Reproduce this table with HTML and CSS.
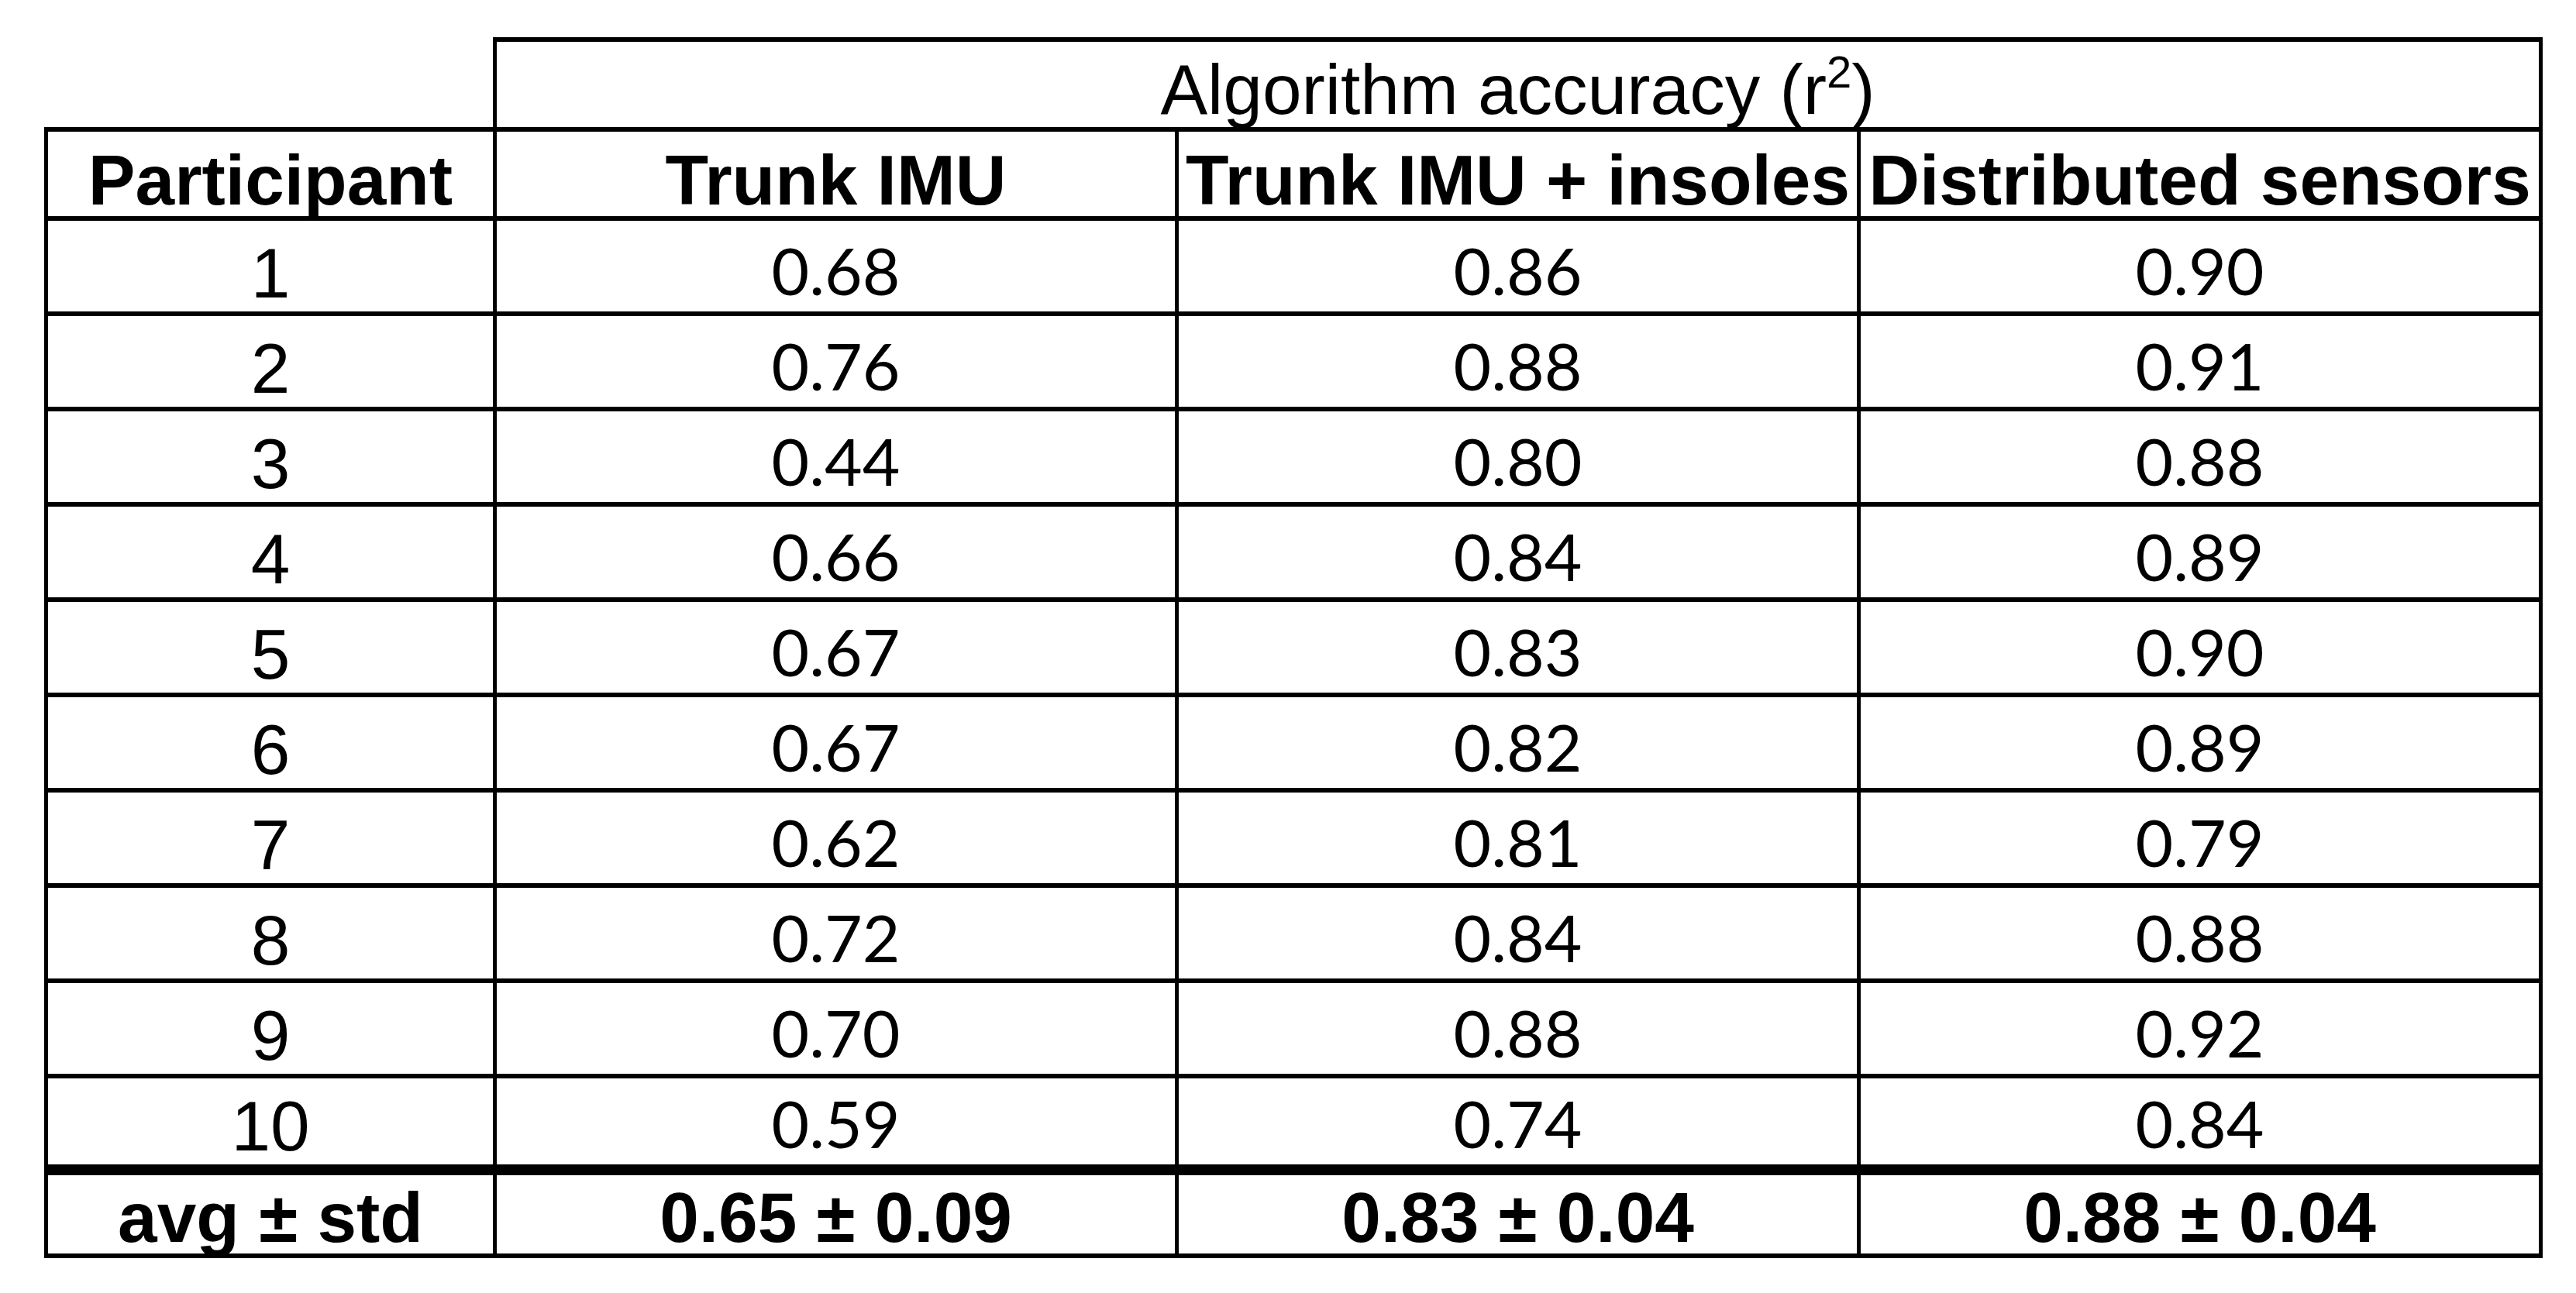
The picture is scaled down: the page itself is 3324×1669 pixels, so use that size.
FILE: index.html
```html
<!DOCTYPE html>
<html lang="en">
<head>
    <meta charset="UTF-8">
    <title>Algorithm accuracy</title>
    <link rel="stylesheet" href="styles.css">
</head>
<body>
    <table class="results">
        <colgroup>
            <col class="col-participant">
            <col class="col-value">
            <col class="col-value">
            <col class="col-value">
        </colgroup>
        <tr class="group-row">
            <td class="blank"></td>
            <td class="group" colspan="3">Algorithm accuracy (r<sup>2</sup>)</td>
        </tr>
        <tr class="head-row">
            <th>Participant</th>
            <th>Trunk IMU</th>
            <th>Trunk IMU + insoles</th>
            <th>Distributed sensors</th>
        </tr>
        <tr><td class="id">1</td><td>0.68</td><td>0.86</td><td>0.90</td></tr>
        <tr><td class="id">2</td><td>0.76</td><td>0.88</td><td>0.91</td></tr>
        <tr><td class="id">3</td><td>0.44</td><td>0.80</td><td>0.88</td></tr>
        <tr><td class="id">4</td><td>0.66</td><td>0.84</td><td>0.89</td></tr>
        <tr><td class="id">5</td><td>0.67</td><td>0.83</td><td>0.90</td></tr>
        <tr><td class="id">6</td><td>0.67</td><td>0.82</td><td>0.89</td></tr>
        <tr><td class="id">7</td><td>0.62</td><td>0.81</td><td>0.79</td></tr>
        <tr><td class="id">8</td><td>0.72</td><td>0.84</td><td>0.88</td></tr>
        <tr><td class="id">9</td><td>0.70</td><td>0.88</td><td>0.92</td></tr>
        <tr class="last-row"><td class="id">10</td><td>0.59</td><td>0.74</td><td>0.84</td></tr>
        <tr class="avg-row">
            <td>avg ± std</td>
            <td>0.65 ± 0.09</td>
            <td>0.83 ± 0.04</td>
            <td>0.88 ± 0.04</td>
        </tr>
    </table>
</body>
</html>
```

FILE: styles.css
```css
body {
    margin: 0;
    background: #ffffff;
    color: #000000;
}

.results {
    margin-left: 57px;
    margin-top: 48px;
    width: 3220px;
    border-collapse: collapse;
    table-layout: fixed;
}

.col-participant {
    width: 579px;
}

.col-value {
    width: 880px;
}

.results td,
.results th {
    padding: 0 0 11px 0;
    text-align: center;
    vertical-align: bottom;
    white-space: nowrap;
    line-height: 1;
    border-top: 6px solid #000;
    border-bottom: 6px solid #000;
    border-left: 5px solid #000;
    border-right: 5px solid #000;
    font-family: "Lato", "Liberation Sans", sans-serif;
    font-size: 84px;
    font-weight: normal;
}

.results th {
    font-family: "Liberation Sans", Arial, sans-serif;
    font-size: 91px;
    font-weight: bold;
    padding-bottom: 1px;
}

.results td.id {
    font-family: "Liberation Sans", Arial, sans-serif;
    font-size: 91px;
    padding-bottom: 4px;
}

.results td.blank {
    border-top: none;
    border-left: none;
}

.results td.group {
    font-family: "Liberation Sans", Arial, sans-serif;
    font-size: 91px;
    padding-bottom: 3px;
}

.group sup {
    font-size: 58px;
    line-height: 0;
    vertical-align: 34px;
}

.results tr {
    height: 123px;
}

.results .group-row {
    height: 116px;
}

.results .head-row {
    height: 115px;
}

.results .last-row {
    height: 121px;
}

.results .last-row td {
    border-bottom: 14px solid #000;
}

.results .avg-row {
    height: 111px;
}

.results .avg-row td {
    font-family: "Liberation Sans", Arial, sans-serif;
    font-size: 91px;
    font-weight: bold;
    padding-bottom: 1px;
}
```
